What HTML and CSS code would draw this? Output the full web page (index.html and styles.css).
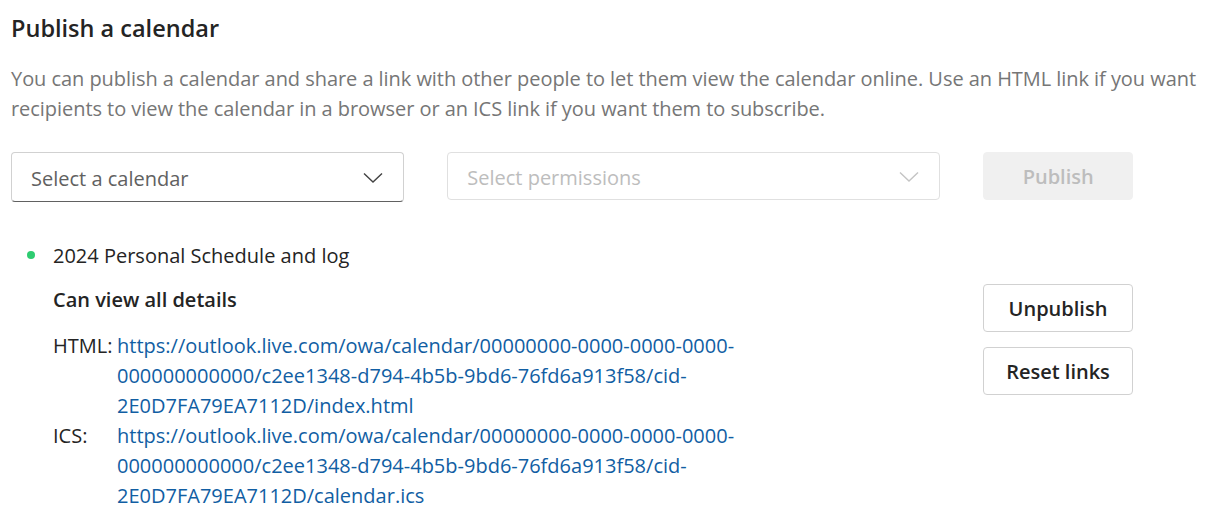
FILE: index.html
```html
<!DOCTYPE html>
<html lang="en">
<head>
<meta charset="utf-8">
<title>Publish a calendar</title>
<link rel="stylesheet" href="styles.css">
</head>
<body>
<div class="page">
  <h1 class="title">Publish a calendar</h1>
  <p class="desc">You can publish a calendar and share a link with other people to let them view the calendar online. Use an HTML link if you want<br>recipients to view the calendar in a browser or an ICS link if you want them to subscribe.</p>

  <div class="controls">
    <div class="select select-cal">
      <span class="select-text">Select a calendar</span>
      <svg class="chev" width="20" height="12" viewBox="0 0 20 12"><path d="M1 1.5 L10 10 L19 1.5" fill="none" stroke="#424242" stroke-width="1.4"/></svg>
    </div>
    <div class="select select-perm">
      <span class="select-text">Select permissions</span>
      <svg class="chev" width="20" height="12" viewBox="0 0 20 12"><path d="M1 1.5 L10 10 L19 1.5" fill="none" stroke="#c4c4c4" stroke-width="1.4"/></svg>
    </div>
    <button class="btn btn-disabled">Publish</button>
  </div>

  <div class="item">
    <span class="dot"></span>
    <span class="item-name">2024 Personal Schedule and log</span>
  </div>

  <div class="details">
    <div class="info">
      <div class="perm">Can view all details</div>
      <div class="links">
        <div class="link-row">
          <span class="label">HTML:</span>
          <a class="url" href="#">https://outlook.live.com/owa/calendar/00000000-0000-0000-0000-<br>000000000000/c2ee1348-d794-4b5b-9bd6-76fd6a913f58/cid-<br>2E0D7FA79EA7112D/index.html</a>
        </div>
        <div class="link-row">
          <span class="label">ICS:</span>
          <a class="url" href="#">https://outlook.live.com/owa/calendar/00000000-0000-0000-0000-<br>000000000000/c2ee1348-d794-4b5b-9bd6-76fd6a913f58/cid-<br>2E0D7FA79EA7112D/calendar.ics</a>
        </div>
      </div>
    </div>
    <div class="actions">
      <button class="btn btn-outline">Unpublish</button>
      <button class="btn btn-outline">Reset links</button>
    </div>
  </div>
</div>
</body>
</html>
```

FILE: styles.css
```css
html, body {
  margin: 0;
  padding: 0;
  background: #ffffff;
}

body {
  font-family: "Open Sans", "Noto Sans", "Liberation Sans", sans-serif;
  color: #242424;
}

.page {
  width: 1122px;
  padding: 12px 11px 0 11px;
}

.title {
  margin: 0;
  font-size: 23.5px;
  line-height: 32px;
  font-weight: 600;
  color: #242424;
}

.desc {
  margin: 20px 0 0 0;
  font-size: 20px;
  line-height: 30px;
  color: #767676;
  white-space: nowrap;
  letter-spacing: -0.05px;
}

.controls {
  display: flex;
  align-items: flex-start;
  gap: 43px;
  margin-top: 28px;
}

.select {
  box-sizing: border-box;
  display: flex;
  align-items: center;
  justify-content: space-between;
  height: 48px;
  border-radius: 4px;
  padding: 2px 20px 0 19px;
  font-size: 20px;
}

.select-cal {
  width: 394px;
  height: 50px;
  border: 1px solid #d1d1d1;
  border-bottom-color: #616161;
  color: #616161;
}

.select-perm {
  width: 494px;
  border: 1px solid #e0e0e0;
  color: #bdbdbd;
}

.chev {
  display: block;
}

.btn {
  box-sizing: border-box;
  width: 150px;
  height: 48px;
  border-radius: 4px;
  font-family: inherit;
  font-size: 20px;
  font-weight: 600;
  padding: 0;
}

.btn-disabled {
  background: #f0f0f0;
  border: 1px solid #f0f0f0;
  color: #bdbdbd;
}

.btn-outline {
  background: #ffffff;
  border: 1px solid #d1d1d1;
  color: #242424;
}

.item {
  display: flex;
  align-items: center;
  margin-top: 38px;
  padding-left: 16px;
  height: 30px;
  font-size: 20px;
}

.dot {
  width: 8px;
  height: 8px;
  border-radius: 50%;
  background: #2ecc71;
  margin-right: 18px;
}

.details {
  display: flex;
  justify-content: space-between;
  align-items: flex-start;
  margin-top: 15px;
  padding-left: 42px;
}

.perm {
  font-size: 20px;
  line-height: 30px;
  font-weight: 600;
}

.links {
  margin-top: 16px;
}

.link-row {
  display: flex;
  font-size: 20px;
  line-height: 30px;
}

.label {
  width: 64px;
  flex: none;
}

.url {
  color: #115ea3;
  text-decoration: none;
}

.actions {
  display: flex;
  flex-direction: column;
  gap: 15px;
  margin-top: -1px;
}
```
